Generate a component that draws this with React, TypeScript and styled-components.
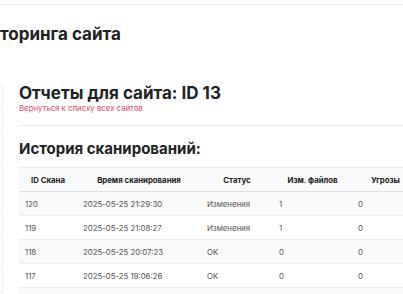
import React from "react";
import styled, { createGlobalStyle } from "styled-components";

const Global = createGlobalStyle`
  html, body { margin: 0; padding: 0; background: #fff; overflow: hidden; }
  body { font-family: Inter, "Noto Sans", sans-serif; color: #222; }
  * { box-sizing: border-box; }
`;

const Page = styled.div`
  width: 700px;
`;

const TopBar = styled.div`
  height: 5px;
  border-bottom: 1px solid #efefef;
`;

const PageTitle = styled.h1`
  margin: 0;
  padding: 19px 0 0 0;
  height: 78px;
  font-size: 17px;
  line-height: 20px;
  font-weight: 700;
  color: #222;
`;

const Layout = styled.div`
  display: flex;
  align-items: flex-start;
`;

const Sidebar = styled.ul`
  list-style: none;
  margin: 0 0 0 -197px;
  padding: 0;
  width: 200px;
  border: 1px solid #eeeeee;
  border-radius: 3px;
  flex-shrink: 0;
`;

const SideItem = styled.li`
  height: 26px;
  border-bottom: 1px solid #eeeeee;
`;

const Main = styled.main`
  flex: 1;
  padding: 0 0 0 16px;
`;

const Heading = styled.h2`
  margin: 0;
  font-size: 17px;
  line-height: 20px;
  font-weight: 700;
  color: #222;
`;

const BackLink = styled.a`
  display: block;
  font-size: 7.8px;
  line-height: 10px;
  color: #e04a5f;
  text-decoration: none;
  margin-top: 0;
`;

const Divider = styled.hr`
  border: none;
  border-top: 1px solid #eeeeee;
  margin: 12px 0 14px;
`;

const SubHeading = styled.h3`
  margin: 0 0 9px;
  font-size: 15px;
  line-height: 18px;
  font-weight: 700;
  color: #222;
`;

const Table = styled.table`
  border-collapse: collapse;
  width: 400px;
  font-size: 7.8px;
  border-top: 1px solid #e9ecef;
`;

const Th = styled.th<{ $w: number }>`
  width: ${(p) => p.$w}px;
  height: 24px;
  background: #f8f9fa;
  font-weight: 700;
  color: #222;
  text-align: center;
  border-bottom: 1px solid #dee2e6;
  padding: 0 6px;
`;

const Tr = styled.tr<{ $striped: boolean }>`
  background: ${(p) => (p.$striped ? "#f9f9f9" : "#fff")};
`;

const Td = styled.td`
  height: 24px;
  padding: 0 6px;
  color: #555;
  border-bottom: 1px solid #eeeeee;
  text-align: left;
`;

const cols = [
  { t: "ID Скана", w: 58 },
  { t: "Время сканирования", w: 124 },
  { t: "Статус", w: 72 },
  { t: "Изм. файлов", w: 79 },
  { t: "Угрозы", w: 67 },
];

const rows = [
  ["120", "2025-05-25 21:29:30", "Изменения", "1", "0"],
  ["119", "2025-05-25 21:08:27", "Изменения", "1", "0"],
  ["118", "2025-05-25 20:07:23", "OK", "0", "0"],
  ["117", "2025-05-25 19:06:26", "OK", "0", "0"],
  ["116", "", "", "", ""],
];

export default function App() {
  return (
    <Page>
      <Global />
      <TopBar />
      <PageTitle>торинга сайта</PageTitle>
      <Layout>
        <Sidebar>
          {Array.from({ length: 9 }).map((_, i) => (
            <SideItem key={i} />
          ))}
        </Sidebar>
        <Main>
          <Heading>Отчеты для сайта: ID 13</Heading>
          <BackLink href="#">Вернуться к списку всех сайтов</BackLink>
          <Divider />
          <SubHeading>История сканирований:</SubHeading>
          <Table>
            <thead>
              <tr>
                {cols.map((c) => (
                  <Th key={c.t} $w={c.w}>
                    {c.t}
                  </Th>
                ))}
              </tr>
            </thead>
            <tbody>
              {rows.map((r, i) => (
                <Tr key={i} $striped={i % 2 === 0}>
                  {r.map((v, j) => (
                    <Td key={j}>{i === 4 ? "\u00a0" : v}</Td>
                  ))}
                </Tr>
              ))}
            </tbody>
          </Table>
        </Main>
      </Layout>
    </Page>
  );
}
